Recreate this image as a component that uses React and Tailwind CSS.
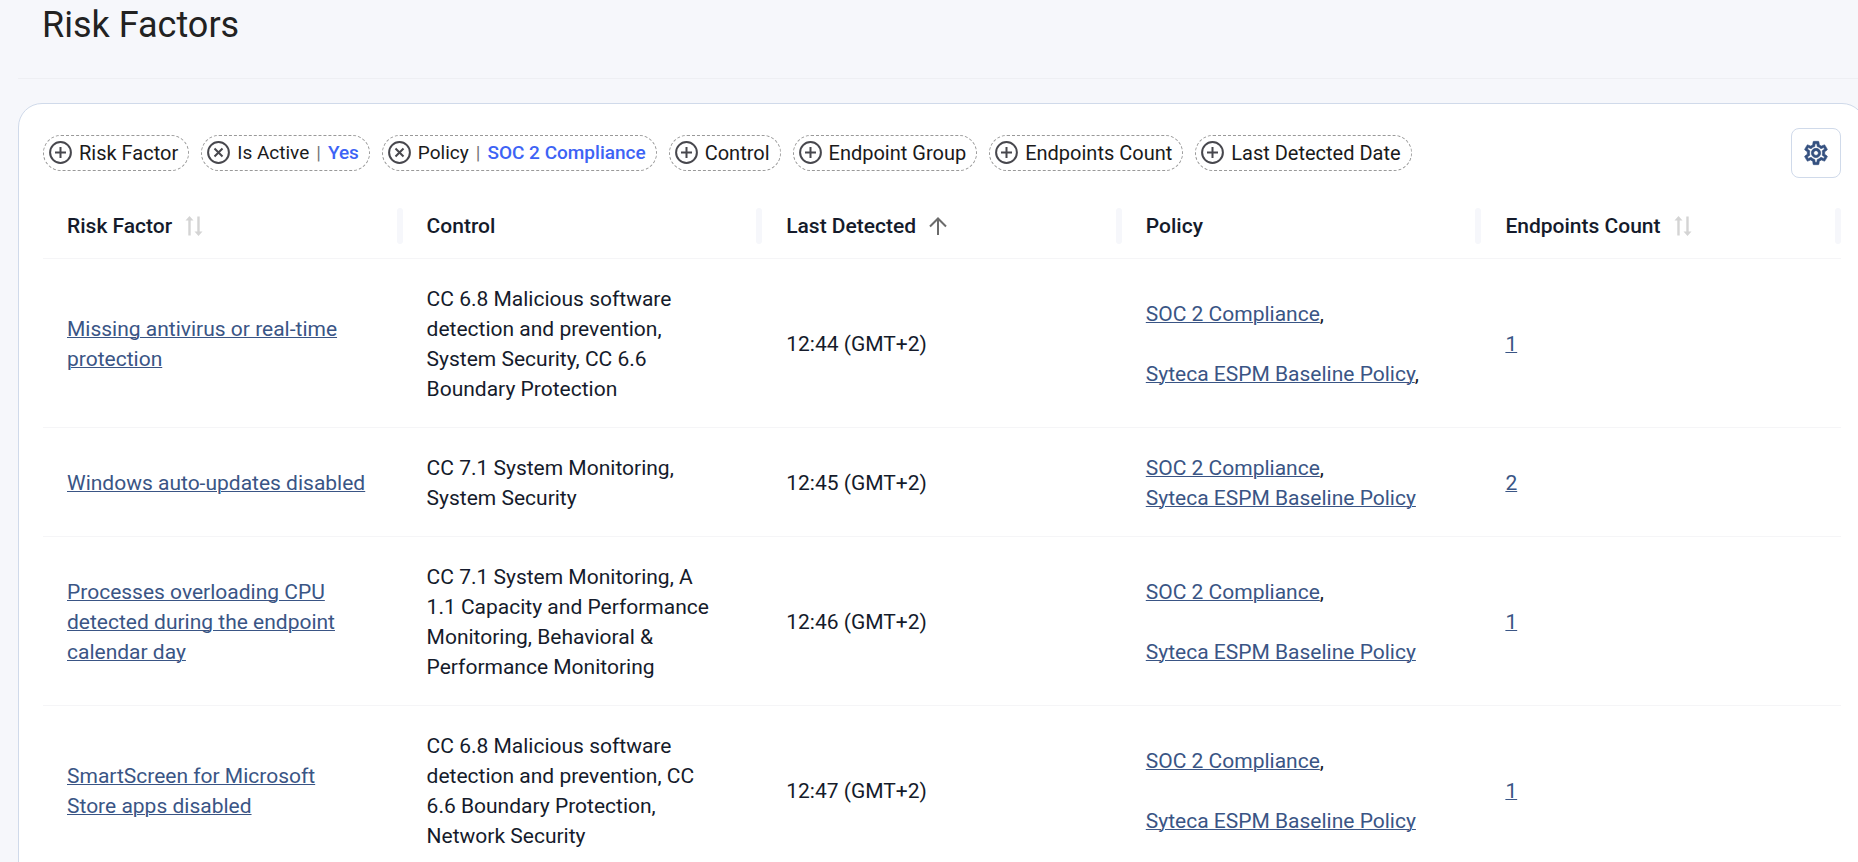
import React, { useState } from "react";
import { MdOutlineSettings } from "react-icons/md";

const filters = [
  { label: "Risk Factor" },
  { label: "Is Active", value: "Yes" },
  { label: "Policy", value: "SOC 2 Compliance" },
  { label: "Control" },
  { label: "Endpoint Group" },
  { label: "Endpoints Count" },
  { label: "Last Detected Date" },
];

const columns = [
  { label: "Risk Factor", sortable: true },
  { label: "Control" },
  { label: "Last Detected", sortable: true },
  { label: "Policy" },
  { label: "Endpoints Count", sortable: true },
];

const rows = [
  {
    name: "Missing antivirus or real-time protection",
    control:
      "CC 6.8 Malicious software detection and prevention, System Security, CC 6.6 Boundary Protection",
    time: "12:44 (GMT+2)",
    spaced: true,
    trailing: true,
    count: 1,
  },
  {
    name: "Windows auto-updates disabled",
    control: "CC 7.1 System Monitoring, System Security",
    time: "12:45 (GMT+2)",
    count: 2,
  },
  {
    name: "Processes overloading CPU detected during the endpoint calendar day",
    control:
      "CC 7.1 System Monitoring, A 1.1 Capacity and Performance Monitoring, Behavioral & Performance Monitoring",
    time: "12:46 (GMT+2)",
    spaced: true,
    count: 1,
  },
  {
    name: "SmartScreen for Microsoft Store apps disabled",
    control:
      "CC 6.8 Malicious software detection and prevention, CC 6.6 Boundary Protection, Network Security",
    time: "12:47 (GMT+2)",
    spaced: true,
    count: 1,
  },
];

const ChipIcon = ({ active }) => (
  <svg viewBox="0 0 24 24" className="size-6 shrink-0" fill="none" stroke="#47474d" strokeWidth="2">
    <circle cx="11.5" cy="11.5" r="10.4" />
    {active ? <path d="M7.5 7.5l8 8M15.5 7.5l-8 8" /> : <path d="M11.5 6v11M6 11.5h11" />}
  </svg>
);

const SortIcon = ({ type }) =>
  type === "asc" ? (
    <svg viewBox="0 0 20 20" className="size-5" fill="none" stroke="#6b6b6b" strokeWidth="2">
      <path d="M10 19V2.5M2 10.5l8-8 8 8" />
    </svg>
  ) : (
    <svg viewBox="0 0 20 20" className="size-5" fill="#d4d4d4">
      <path d="M5.5 0L9.5 4.5H6.7V19.5H4.3V4.5H1.5Z" />
      <path d="M14.5 20L10.5 15.5H13.3V.5H15.7V15.5H18.5Z" />
    </svg>
  );

const Link = ({ children }) => (
  <a href="#" className="text-[#3a5585] underline decoration-1">
    {children}
  </a>
);

const App = () => {
  const [sortBy, setSortBy] = useState("Last Detected");

  return (
    <div className="h-screen overflow-hidden bg-[#f6f7fb] pl-[18px] font-[Roboto,sans-serif] text-[#151b2b]">
      <header className="border-b border-[#eeeff3] pt-[5px] pb-[33px] pl-6">
        <h1 className="text-4xl text-[#222]">Risk Factors</h1>
      </header>

      <main className="mt-6 -mr-2 min-h-screen rounded-3xl border border-[#d0daea] bg-white p-6">
        <div className="flex items-center justify-between">
          <div className="flex gap-3">
            {filters.map(({ label, value }) => (
              <button
                key={label}
                className="flex h-9 items-center gap-1.5 rounded-full border border-dashed border-[#999] pr-2.5 pl-[5px] text-xl whitespace-nowrap text-[#1a1a1a]"
              >
                <ChipIcon active={Boolean(value)} />
                {value ? (
                  <span className="flex gap-[7px] text-[19px]">
                    {label}
                    <span className="text-[#777]">|</span>
                    <span className="font-medium text-[#3d63f5]">{value}</span>
                  </span>
                ) : (
                  <span>{label}</span>
                )}
              </button>
            ))}
          </div>
          <button
            aria-label="Table settings"
            className="flex size-[50px] items-center justify-center rounded-lg border border-[#d0daea] text-[#34507f]"
          >
            <MdOutlineSettings className="size-7 stroke-current stroke-[0.5] [&>path:first-child]:stroke-none" />
          </button>
        </div>

        <table className="mt-4 w-full table-fixed text-left text-[21px] leading-[30px]">
          <thead>
            <tr className="h-16 border-b border-[#f5f5f7]">
              {columns.map(({ label, sortable }) => (
                <th key={label} className="p-0 font-medium">
                  <div className="flex h-9 items-center justify-between pl-6">
                    {sortable ? (
                      <button onClick={() => setSortBy(label)} className="flex items-center gap-3">
                        {label}
                        <SortIcon type={sortBy === label ? "asc" : "both"} />
                      </button>
                    ) : (
                      <span>{label}</span>
                    )}
                    <span className="h-9 w-1.5 rounded-sm bg-[#f6f7fb]" />
                  </div>
                </th>
              ))}
            </tr>
          </thead>
          <tbody>
            {rows.map((row) => (
              <tr key={row.time} className="border-b border-[#f5f5f7]">
                <td className="px-6 pt-[25px] pb-[23px]">
                  <div className="max-w-[300px]">
                    <Link>{row.name}</Link>
                  </div>
                </td>
                <td className="px-6 pt-[25px] pb-[23px]">
                  <div className="max-w-[290px]">{row.control}</div>
                </td>
                <td className="px-6 pt-[25px] pb-[23px]">{row.time}</td>
                <td className="px-6 pt-[25px] pb-[23px]">
                  <div className={row.spaced ? "flex flex-col gap-[30px]" : "flex flex-col"}>
                    <span>
                      <Link>SOC 2 Compliance</Link>,
                    </span>
                    <span>
                      <Link>Syteca ESPM Baseline Policy</Link>
                      {row.trailing && ","}
                    </span>
                  </div>
                </td>
                <td className="px-6 pt-[25px] pb-[23px]">
                  <Link>{row.count}</Link>
                </td>
              </tr>
            ))}
          </tbody>
        </table>
      </main>
    </div>
  );
};

export default App;
